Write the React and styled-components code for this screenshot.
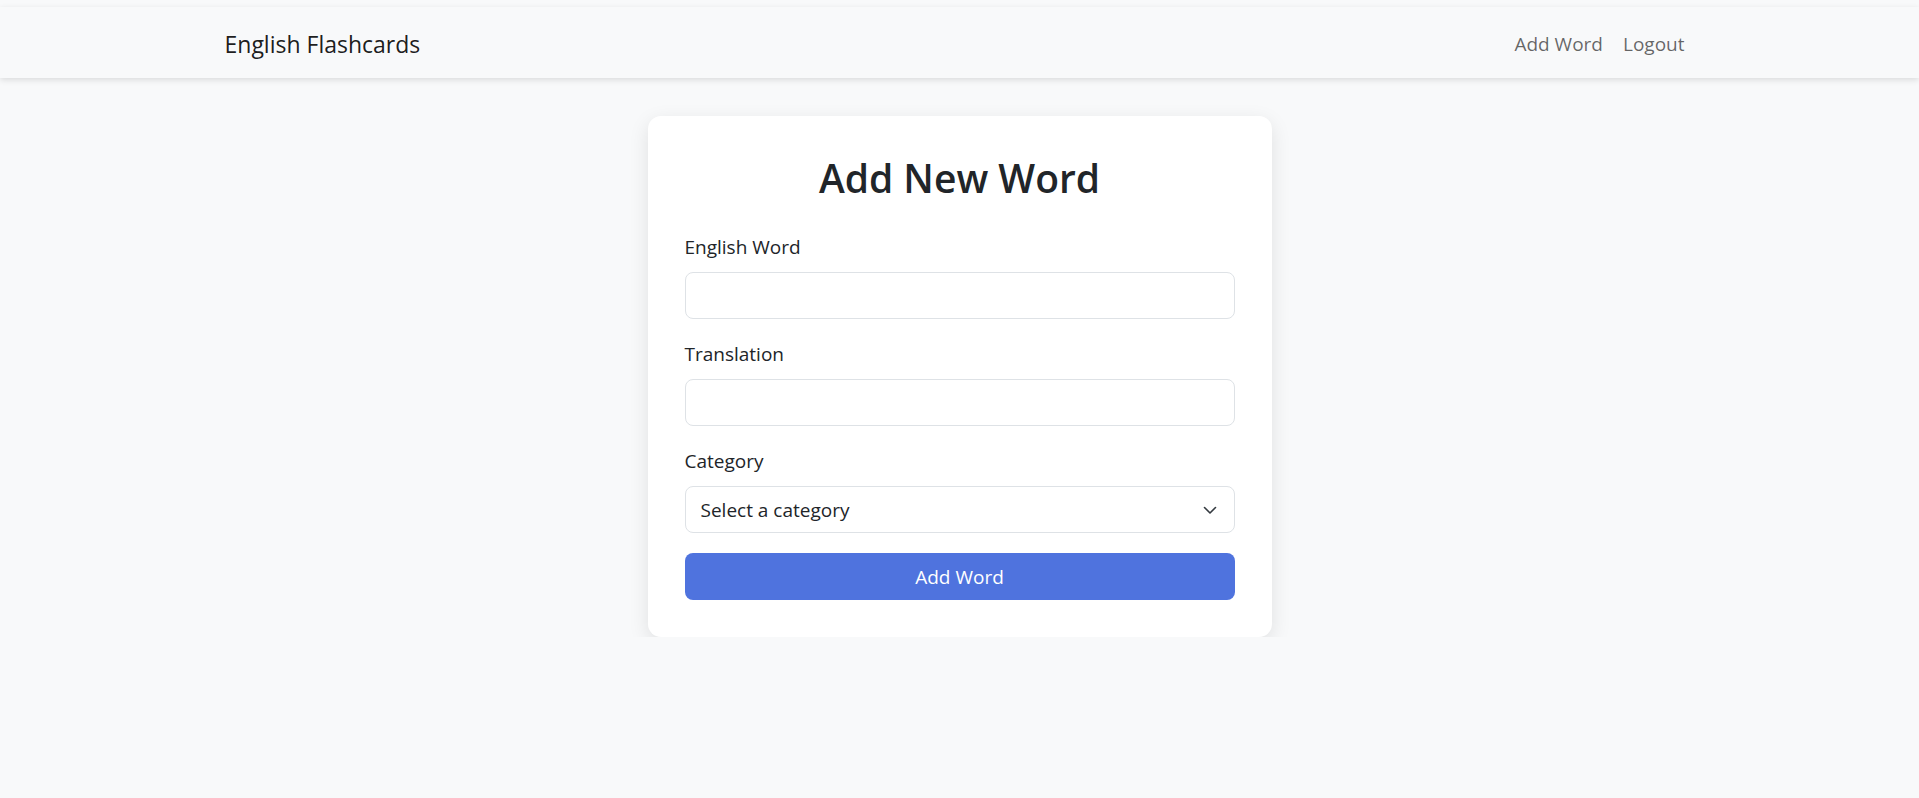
import styled, { createGlobalStyle } from "styled-components";

const GlobalStyle = createGlobalStyle`
    * {
        box-sizing: border-box;
    }
    body {
        margin: 0;
        background-color: #f8f9fa;
        font-family: "Open Sans", "Noto Sans", sans-serif;
        color: #212529;
    }
`;

const StyledNavbar = styled.nav`
    margin-top: 7px;
    height: 71px;
    padding-top: 2px;
    background-color: #f8f9fa;
    box-shadow: 0 2px 6px rgba(0, 0, 0, 0.12);
    display: flex;
    align-items: center;
`;

const StyledNavInner = styled.div`
    width: 1470px;
    margin: 0 auto;
    display: flex;
    align-items: center;
    justify-content: space-between;
`;

const StyledBrand = styled.a`
    font-size: 23px;
    color: rgba(0, 0, 0, 0.9);
    text-decoration: none;
`;

const StyledLinks = styled.div`
    display: flex;
`;

const StyledNavLink = styled.a`
    font-size: 19px;
    color: rgba(0, 0, 0, 0.6);
    text-decoration: none;
    padding: 0 10px;
`;

const StyledMain = styled.main`
    display: flex;
    justify-content: center;
    padding-top: 38px;
`;

const StyledCard = styled.div`
    width: 624px;
    background-color: #fff;
    border-radius: 13px;
    box-shadow: 0 6px 20px rgba(0, 0, 0, 0.1);
    padding: 38px 37px 37px;
`;

const StyledTitle = styled.h2`
    margin: 0 0 30px;
    text-align: center;
    font-size: 39px;
    font-weight: 600;
    line-height: 48px;
    color: #212529;
`;

const StyledGroup = styled.div`
    margin-bottom: 20px;
`;

const StyledLabel = styled.label`
    display: block;
    font-size: 19px;
    line-height: 30px;
    margin-bottom: 10px;
`;

const fieldStyles = `
    display: block;
    width: 100%;
    height: 47px;
    border: 1px solid #dee2e6;
    border-radius: 8px;
    background-color: #fff;
    font-family: inherit;
    font-size: 19px;
    color: #212529;
    padding: 0 15px;
    outline: none;
`;

const StyledInput = styled.input`
    ${fieldStyles}
`;

const StyledSelectWrap = styled.div`
    position: relative;
`;

const StyledSelect = styled.select`
    ${fieldStyles}
    appearance: none;
    padding-right: 45px;
`;

const StyledChevron = styled.svg`
    position: absolute;
    right: 17px;
    top: 50%;
    transform: translateY(-50%);
    pointer-events: none;
`;

const StyledButton = styled.button`
    display: block;
    width: 100%;
    height: 47px;
    border: none;
    border-radius: 8px;
    background-color: #4f73de;
    color: #fff;
    font-family: inherit;
    font-size: 19px;
    cursor: pointer;
`;

function App() {
    return (
        <>
            <GlobalStyle />
            <StyledNavbar>
                <StyledNavInner>
                    <StyledBrand href="#">English Flashcards</StyledBrand>
                    <StyledLinks>
                        <StyledNavLink href="#">Add Word</StyledNavLink>
                        <StyledNavLink href="#">Logout</StyledNavLink>
                    </StyledLinks>
                </StyledNavInner>
            </StyledNavbar>
            <StyledMain>
                <StyledCard>
                    <StyledTitle>Add New Word</StyledTitle>
                    <form onSubmit={(e) => e.preventDefault()}>
                        <StyledGroup>
                            <StyledLabel htmlFor="english">English Word</StyledLabel>
                            <StyledInput id="english" type="text" />
                        </StyledGroup>
                        <StyledGroup>
                            <StyledLabel htmlFor="translation">Translation</StyledLabel>
                            <StyledInput id="translation" type="text" />
                        </StyledGroup>
                        <StyledGroup>
                            <StyledLabel htmlFor="category">Category</StyledLabel>
                            <StyledSelectWrap>
                                <StyledSelect id="category" defaultValue="">
                                    <option value="">Select a category</option>
                                </StyledSelect>
                                <StyledChevron width="16" height="16" viewBox="0 0 16 16">
                                    <path
                                        d="M2.5 5.5l5.5 5.5 5.5-5.5"
                                        fill="none"
                                        stroke="#343a40"
                                        strokeWidth="1.6"
                                        strokeLinecap="round"
                                        strokeLinejoin="round"
                                    />
                                </StyledChevron>
                            </StyledSelectWrap>
                        </StyledGroup>
                        <StyledButton type="submit">Add Word</StyledButton>
                    </form>
                </StyledCard>
            </StyledMain>
        </>
    );
}

export default App;
